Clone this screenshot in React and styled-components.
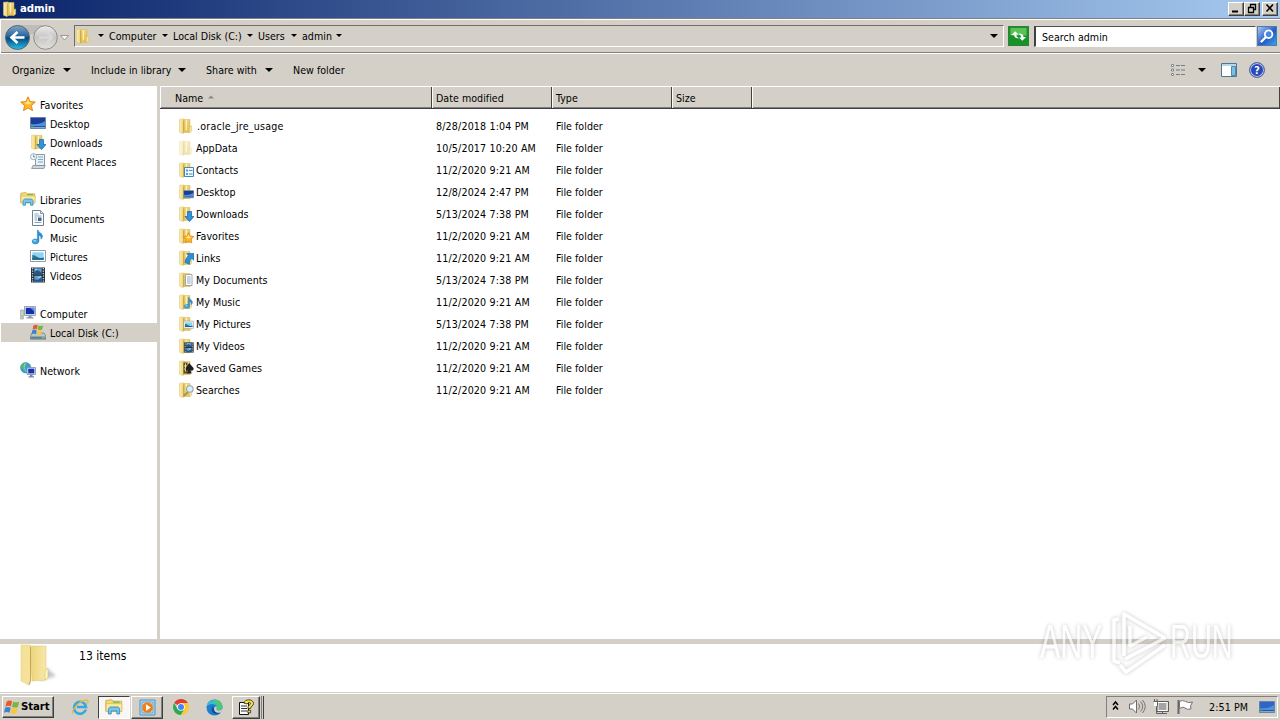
import React from "react";
import styled, { createGlobalStyle, css } from "styled-components";

const face = "#d4d0c8";

const GlobalStyle = createGlobalStyle`
  * {
    box-sizing: border-box;
  }
  body {
    margin: 0;
    background: #ffffff;
    overflow: hidden;
  }
`;

function Folder({ faded, children }) {
  return (
    <svg width="16" height="16" viewBox="0 0 16 16">
      <defs>
        <linearGradient id="folderFront" x2="1">
          <stop stopColor="#fbeeb0" />
          <stop offset="1" stopColor="#ecd070" />
        </linearGradient>
        <linearGradient id="folderBack" x2="1" y2="1">
          <stop stopColor="#f8e597" />
          <stop offset="1" stopColor="#dfb741" />
        </linearGradient>
      </defs>
      <g opacity={faded ? 0.45 : 1}>
        <path d="M5.500 1.500H12v13H5.500z" fill="url(#folderBack)" stroke="#d8b758" strokeWidth=".5" />
        <path d="M11.300 9l2.400-1.200v5.400L11.300 14.800z" fill="#f7e79f" stroke="#cfae4b" strokeWidth=".4" />
        <path d="M1.500 1.300L6.200.9v13.500l-1.200 1.200-3.500-1.400z" fill="url(#folderFront)" stroke="#dfc56c" strokeWidth=".5" />
        <path d="M6.300 1.500v12.800l-1.200 1.200V3z" fill="#cda844" />
        <path d="M8.500 2v10" stroke="#fbf0b8" />
      </g>
      {children}
    </svg>
  );
}

const Monitor = ({ bright }) => (
  <>
    <path d="M.5 2.500h15v11H.5z" fill="#2852a4" stroke="#6c83a8" />
    <path d="M1 3h14v4.500L5 10 1 9z" fill={bright ? "#2f66c4" : "#1c3d97"} />
    <path d="M1 9q8 1 14-3v5H1z" fill="#4a92de" />
    <path d="M1 12.500h14" stroke="#8ba6c7" />
    <path d="M1.500 12h2" stroke="#63be4f" />
  </>
);

const Arrow = () => (
  <path d="M9.500 5.500h4v5H16l-4.500 5L7 10.500h2.500z" fill="#2f93df" stroke="#1763a8" strokeWidth=".7" />
);

const Star = () => (
  <>
    <path
      d="M8 .8l2.100 4.700 5.200.6-3.900 3.400 1.100 5.100L8 12l-4.500 2.600 1.100-5.100L.7 6.100l5.200-.6z"
      fill="#ffb92b"
      stroke="#e17c14"
      strokeWidth=".9"
    />
    <path d="M8 3l1.200 3.300 3 .4L8 8.500 4 6.700l2.800-.4z" fill="#ffe88c" />
  </>
);

const Note = () => (
  <>
    <path d="M8 1c.6 3 4.400 3 4.400 6.200 0 1.300-.6 2.400-1.500 3 .5-2.500-.8-3.600-2-4v6.200H7.400V1z" fill="#2d91d4" stroke="#2277b5" strokeWidth=".5" />
    <ellipse cx="5.400" cy="12.400" rx="3.300" ry="2.500" fill="#40a3e0" stroke="#2277b5" strokeWidth=".5" />
    <ellipse cx="4.800" cy="11.700" rx="1.400" ry=".8" fill="#a3dcf7" />
  </>
);

const Picture = () => (
  <>
    <path d="M.5 2.500h15v11H.5z" fill="#fff" stroke="#8d9cab" />
    <path d="M2.300 4.300h11.400v7.400H2.300z" fill="#8fd3f2" />
    <path d="M2.300 7q3 0 5 2t6.400.2v2.500H2.300z" fill="#2f7d75" />
    <path d="M2.300 10q6-.6 11.400.4v1.300H2.300z" fill="#1a64a0" />
  </>
);

const Film = () => (
  <>
    <path d="M1 .5h14v15H1z" fill="#25313f" />
    <path d="M2.600 1v14M13.400 1v14" stroke="#c8d1db" strokeWidth="1.300" strokeDasharray="1.200 1.300" />
    <path d="M4.300 1.300h7.400v6H4.300zM4.300 8.700h7.400v6H4.300z" fill="#5f9fd2" />
    <path d="M4.300 5l3-2 4.400 2.600v1.700H4.300zM4.300 12l3.400 1 4-2.400v4.100H4.300z" fill="#2a5684" />
    <path d="M5 3l2-1M8 10.500l3-.8" stroke="#b0ddf7" />
  </>
);

const Document = () => (
  <>
    <path d="M2.500.5h8l3 3v12h-11z" fill="#fdfeff" stroke="#6f8091" />
    <path d="M10.500.5v3h3" fill="#d7e3ee" stroke="#6f8091" strokeWidth=".8" />
    <path d="M4.500 4h4M4.500 6h7M4.500 8h2.500M4.500 10h2.500M4.500 12.500h7" stroke="#8ba4ba" />
    <path d="M8 7.500h3.500v3.500H8z" fill="#3c6694" />
  </>
);

const overlays = {
  contacts: (
    <>
      <path d="M6.500 5.500h9v9h-9z" fill="#edf8ff" stroke="#4585b7" />
      <path d="M8 7.500h2v2H8zM8 11h2v2H8z" fill="#4f9fd4" />
      <path d="M11 8.500h3.500M11 12h3.500" stroke="#558ab2" />
    </>
  ),
  desktop: <g transform="translate(5.500 5) scale(.65)"><Monitor /></g>,
  downloads: <Arrow />,
  favorites: <g transform="translate(4.500 4) scale(.75)"><Star /></g>,
  links: (
    <path d="M8.500 3.500H16v7l-2.200-2.200c-1.500 1.400-2.400 3.400-2.200 6L7 12.500c0-2.800 1.800-5.200 3.700-7z" fill="#2b8ed8" stroke="#1765a5" strokeWidth=".6" />
  ),
  documents: (
    <>
      <path d="M7.500 2.500h6.500v11H7.500z" fill="#fff" stroke="#8496a5" strokeWidth=".8" />
      <path d="M9 5h3.700M9 7h3.700M9 9h3.700M9 11h3.700" stroke="#7494b0" strokeWidth=".8" />
    </>
  ),
  music: <g transform="translate(4.500 2.500) scale(.8)"><Note /></g>,
  pictures: <g transform="translate(5.500 3.500) scale(.65)"><Picture /></g>,
  videos: <g transform="translate(5.500 4) scale(.68)"><Film /></g>,
  games: (
    <>
      <path d="M5.500 2.500h4v11h-4z" fill="#5a4b27" />
      <path d="M7.500 3.500v8M6 6h3M6 9h3" stroke="#efe0a7" />
      <path d="M11.200 3l4.300 5c.8 2-1.300 3.500-3 2.200l1 3.300H8.800l1.400-3.300C8.500 11.300 7 9.500 8 7.800z" fill="#1e2022" />
    </>
  ),
  searches: (
    <>
      <path d="M10 9.600L5.800 14" stroke="#a38b5a" strokeWidth="1.800" />
      <circle cx="11.800" cy="7" r="3.300" fill="#d8effa" stroke="#91a7b6" strokeWidth="1.100" />
    </>
  ),
};

function LibraryIcon({ size = 16 }) {
  return (
    <svg width={size} height={size} viewBox="0 0 16 16">
      <path d="M.7 2.200L6 1.500l1 1.300h7.800v9H.7z" fill="#f4d978" stroke="#c7a43d" strokeWidth=".7" />
      <path d="M1 5h14v7H1z" fill="#faeaa1" stroke="#d6b64f" strokeWidth=".6" />
      <path d="M7 3.700h6" stroke="#63b355" />
      <path d="M3 14.200V9.500L4.600 8h7.100L13 9.500v4.700h-2.500v-2.700h-5v2.700z" fill="#78c6ed" stroke="#368dbc" strokeWidth=".8" />
    </svg>
  );
}

function Flag() {
  return (
    <g>
      <path d="M2.400 2.500Q5 .6 7.600 2L6.500 7Q4.200 5.700 1.300 7.200z" fill="#e9592c" />
      <path d="M8.600 2.300q2.700 1.500 5.600.2L13 7.400q-2.700 1.300-5.500 0z" fill="#78b63e" />
      <path d="M1 8.200q2.800-1.500 5.300 0L5.200 13Q2.800 11.600 0 13z" fill="#3f83cc" />
      <path d="M7.300 8.400q2.700 1.300 5.400.1l-1.200 4.800q-2.600 1.400-5.300-.1z" fill="#f8c637" />
    </g>
  );
}

function NavIcon({ name }) {
  if (name === "libraries") return <LibraryIcon />;
  if (name === "downloads") return <Folder>{overlays.downloads}</Folder>;
  const shapes = {
    favorites: <Star />,
    desktop: <Monitor />,
    documents: <Document />,
    music: <Note />,
    pictures: <Picture />,
    videos: <Film />,
    recent: (
      <>
        <path d="M5.500 1.500h9v11h-9z" fill="#e9eff2" stroke="#8999a4" />
        <path d="M3 12.500h12.200l-1.300 3H1.600z" fill="#ccd6dc" stroke="#7b8b97" strokeWidth=".8" />
        <path d="M8 4h5M8 6.500h5M8 9h5" stroke="#7fa9c4" />
        <circle cx="3.600" cy="3.700" r="3.100" fill="#f4f9fc" stroke="#8d9aa4" strokeWidth=".8" />
        <path d="M3.600 1.800v2.100h1.700" stroke="#496f89" strokeWidth=".8" fill="none" />
      </>
    ),
    computer: (
      <>
        <path d="M.7 5h2.600v9H.7z" fill="#d1dbc5" stroke="#8a9790" strokeWidth=".7" />
        <path d="M1.400 11h1.300" stroke="#6eb53d" />
        <path d="M4.500 1.500h11v9h-11z" fill="#dce3e9" stroke="#8293a4" strokeWidth=".8" />
        <path d="M5.800 2.800h8.500v6.300H5.800z" fill="#162fb0" />
        <path d="M10 2.800h4.300v3.800z" fill="#5c8ee5" />
        <path d="M8.500 10.800h3v1.500h2v1.200h-7v-1.200h2z" fill="#8996a6" />
      </>
    ),
    disk: (
      <>
        <path d="M2 9h12l2 3.400v2.800H.3v-2.800z" fill="#b9c9d0" stroke="#63747f" strokeWidth=".7" />
        <path d="M.5 12.500h15.200v2.400H.5z" fill="#638291" />
        <path d="M12 13.700h2.500" stroke="#86df6c" />
        <g transform="translate(1.500 -.5) scale(.82)"><Flag /></g>
      </>
    ),
    network: (
      <>
        <circle cx="5.700" cy="5.700" r="5.200" fill="#38a0cd" stroke="#267ba5" strokeWidth=".5" />
        <path d="M2 2.500q3-2 5-.8L6.300 4 4 5l-.5 3L1 6z" fill="#5bba5f" />
        <path d="M5.500 1q-3 4 1 9" stroke="#a9def1" fill="none" strokeWidth=".7" />
        <path d="M7 5.500h8.500v7H7z" fill="#d8e4ef" stroke="#7c91a9" strokeWidth=".8" />
        <path d="M8.200 6.700h6.100v4.700H8.200z" fill="#1736b7" />
        <path d="M10 12.800h2.500v1.400H14v1.200H8.500v-1.200H10z" fill="#75899f" />
      </>
    ),
  };
  return <svg width="16" height="16" viewBox="0 0 16 16">{shapes[name]}</svg>;
}

const navGroups = [
  [
    { label: "Favorites", icon: "favorites", root: true },
    { label: "Desktop", icon: "desktop" },
    { label: "Downloads", icon: "downloads" },
    { label: "Recent Places", icon: "recent" },
  ],
  [
    { label: "Libraries", icon: "libraries", root: true },
    { label: "Documents", icon: "documents" },
    { label: "Music", icon: "music" },
    { label: "Pictures", icon: "pictures" },
    { label: "Videos", icon: "videos" },
  ],
  [
    { label: "Computer", icon: "computer", root: true },
    { label: "Local Disk (C:)", icon: "disk", selected: true },
  ],
  [{ label: "Network", icon: "network", root: true }],
];

const files = [
  [".oracle_jre_usage", "8/28/2018 1:04 PM", "plain"],
  ["AppData", "10/5/2017 10:20 AM", "faded"],
  ["Contacts", "11/2/2020 9:21 AM", "contacts"],
  ["Desktop", "12/8/2024 2:47 PM", "desktop"],
  ["Downloads", "5/13/2024 7:38 PM", "downloads"],
  ["Favorites", "11/2/2020 9:21 AM", "favorites"],
  ["Links", "11/2/2020 9:21 AM", "links"],
  ["My Documents", "5/13/2024 7:38 PM", "documents"],
  ["My Music", "11/2/2020 9:21 AM", "music"],
  ["My Pictures", "5/13/2024 7:38 PM", "pictures"],
  ["My Videos", "11/2/2020 9:21 AM", "videos"],
  ["Saved Games", "11/2/2020 9:21 AM", "games"],
  ["Searches", "11/2/2020 9:21 AM", "searches"],
];

const crumbs = [
  ["Computer", 64],
  ["Local Disk (C:)", 85],
  ["Users", 44],
  ["admin", 45],
];

const commands = [
  ["Organize", 79],
  ["Include in library", 115],
  ["Share with", 87],
  ["New folder", 70],
];

export default function App() {
  return (
    <Screen>
      <GlobalStyle />
      <TitleBar>
        <Folder />
        <Title>admin</Title>
        <WindowButton>
          <svg width="14" height="11"><path d="M3 8.500h6" stroke="#000" strokeWidth="2" /></svg>
        </WindowButton>
        <WindowButton>
          <svg width="14" height="11">
            <path d="M5.500 1v3M5 1.500h6M10.500 1v5.500H8.500M3 4.500h6M3.500 4v5.500h5V4" fill="none" stroke="#000" strokeWidth="1.300" />
          </svg>
        </WindowButton>
        <WindowButton $gap>
          <svg width="14" height="11"><path d="M3.500 1.500l6.500 7M10 1.500l-6.500 7" stroke="#000" strokeWidth="1.600" /></svg>
        </WindowButton>
      </TitleBar>

      <AddressBar>
        <BackForward />
        <AddressBox>
          <Folder />
          <CrumbArrow><Triangle /></CrumbArrow>
          {crumbs.map(([label, width]) => (
            <Crumb key={label} $width={width}>
              <span>{label}</span>
              <Triangle />
            </Crumb>
          ))}
          <HistoryButton><Triangle $size={4} /></HistoryButton>
        </AddressBox>
        <RefreshButton>
          <svg width="19" height="18" viewBox="0 0 19 19">
            <path d="M1 1h17v8H1z" fill="#5bc057" />
            <path d="M2 8.500l4-4 3.500 3.500H7.300c0 2 .7 3 2.700 4-3 .2-5-1-5.200-3.500z" fill="#fff" />
            <path d="M17.500 10.500l-4 4L10 11h2.300c0-2-1-3.200-2.800-4 3-.3 5.200 1 5.300 3.500z" fill="#fff" />
          </svg>
        </RefreshButton>
        <SearchInput>Search admin</SearchInput>
        <SearchButton>
          <svg width="18" height="18" viewBox="0 0 18 18">
            <path d="M8 10l-4.500 4.500" stroke="#fff" strokeWidth="2.400" strokeLinecap="round" />
            <circle cx="10.600" cy="7.200" r="3.800" fill="#4a87df" stroke="#fff" strokeWidth="1.800" />
          </svg>
        </SearchButton>
      </AddressBar>

      <CommandBar>
        {commands.map(([label, width], i) => (
          <Command key={label} $width={width}>
            <span>{label}</span>
            {i < 3 && <Triangle $size={4} />}
          </Command>
        ))}
        <CommandTools>
          <svg width="17" height="14" viewBox="0 0 17 14">
            <path d="M1.500 1.500h2v2h-2zM1.500 6h2v2h-2zM1.500 10.500h2v2h-2z" fill="#fff" stroke="#7e8993" />
            <path d="M6 2.500h4M11 2.500h4M6 7h4M11 7h4M6 11.500h4M11 11.500h4" stroke="#737d85" />
          </svg>
          <Triangle $size={4} />
          <svg width="16" height="14" viewBox="0 0 16 14">
            <path d="M.5.5h15v13H.5z" fill="#fff" stroke="#4c7695" />
            <path d="M1 2h14" stroke="#b5d8eb" strokeWidth="2" />
            <path d="M10.500 3.500h4v9h-4z" fill="#78c1e3" stroke="#4d88a9" />
          </svg>
          <Help>?</Help>
        </CommandTools>
      </CommandBar>

      <Main>
        <NavPane>
          {navGroups.map((group) => (
            <NavGroup key={group[0].label}>
              {group.map((item) => (
                <NavItem key={item.label} $root={item.root} $selected={item.selected}>
                  <NavIcon name={item.icon} />
                  <span>{item.label}</span>
                </NavItem>
              ))}
            </NavGroup>
          ))}
        </NavPane>
        <FilePane>
          <HeaderRow>
            <HeaderCell $width={272} $first>
              Name
              <svg width="6" height="4"><path d="M0 3.500L3 .5l3 3z" fill="#8d8a84" /></svg>
            </HeaderCell>
            <HeaderCell $width={120}>Date modified</HeaderCell>
            <HeaderCell $width={120}>Type</HeaderCell>
            <HeaderCell $width={80}>Size</HeaderCell>
            <HeaderCell />
          </HeaderRow>
          <FileList>
            {files.map(([name, date, icon]) => (
              <FileRow key={name}>
                <NameCell $wide={name.startsWith(".")}>
                  <Folder faded={icon === "faded"}>{overlays[icon]}</Folder>
                  <span>{name}</span>
                </NameCell>
                <DateCell>{date}</DateCell>
                <span>File folder</span>
              </FileRow>
            ))}
          </FileList>
        </FilePane>
      </Main>

      <Details>
        <svg width="38" height="42" viewBox="0 0 38 42">
          <defs>
            <linearGradient id="front" x2="1">
              <stop stopColor="#ecd37a" />
              <stop offset="1" stopColor="#f8e9a9" />
            </linearGradient>
            <filter id="soft"><feGaussianBlur stdDeviation="1.500" /></filter>
          </defs>
          <path d="M20 37l16-5-9-8z" fill="#c8c8c8" filter="url(#soft)" />
          <path d="M10 2h16v34l-14 1z" fill="url(#front)" stroke="#dbc36f" strokeWidth=".5" />
          <path d="M25 27l3-3v10l-3 2z" fill="#fdf6c4" stroke="#d1b654" strokeWidth=".5" />
          <path d="M1 1h9l.500 4v32L9 41l-8-4z" fill="#f5e19a" stroke="#e0c672" strokeWidth=".5" />
          <path d="M10.500 3v34L9 41" stroke="#c8a74d" fill="none" />
        </svg>
        <ItemCount>13 items</ItemCount>
      </Details>

      <Taskbar>
        <StartButton>
          <svg width="16" height="16" viewBox="0 0 15 15"><Flag /></svg>
          <span>Start</span>
        </StartButton>
        <TaskButton>
          <svg width="18" height="18" viewBox="0 0 18 18">
            <path d="M14.800 11.500A6 6 0 1 1 15 9H6" fill="none" stroke="#36a8df" strokeWidth="2.500" />
            <path d="M1.800 16C-.5 12.500 10 1 16.500 2.300c1 .5.500 2-.5 3.700" fill="none" stroke="#e8b93c" strokeWidth="1.300" />
          </svg>
        </TaskButton>
        <TaskButton $pressed><LibraryIcon size={18} /></TaskButton>
        <TaskButton $raised>
          <svg width="17" height="17" viewBox="0 0 17 17">
            <path d="M1 1h15v15H1z" fill="#b8dcf2" stroke="#4a91bf" />
            <path d="M3 3h11v11H3z" fill="none" stroke="#6fa8cb" />
            <circle cx="8.500" cy="8.500" r="5.300" fill="#ef7f16" />
            <path d="M7 5.300l4.800 3.200L7 11.700z" fill="#fff" />
          </svg>
        </TaskButton>
        <TaskButton>
          <svg width="16" height="16" viewBox="0 0 16 16">
            <path d="M8 8L1.100 4A8 8 0 0 1 15 4H8z" fill="#e33b2e" />
            <path d="M8 8l3.500 2L8 16A8 8 0 0 1 1.100 4L4.500 10z" fill="#2da94f" />
            <path d="M8 4h7a8 8 0 0 1-7 12l3.500-6z" fill="#fcc934" />
            <circle cx="8" cy="8" r="3.800" fill="#fff" />
            <circle cx="8" cy="8" r="3" fill="#4285f4" />
          </svg>
        </TaskButton>
        <TaskButton>
          <svg width="17" height="17" viewBox="0 0 17 17">
            <circle cx="8.500" cy="8.500" r="8" fill="#1b7fce" />
            <path d="M.5 8C1-.5 14-2 16.500 7c.3 3-2 4.500-4.500 4.300-2 0-2.400-.8-1.500-2C12 5 4 3 .5 8z" fill="#35bdce" />
            <path d="M9 .5c4 0 7 3 7.500 6.500.3 3-2 4.500-4.500 4.300-2 0-2.400-.8-1.500-2C12.500 6 10 4 7 3z" fill="#4fc77b" />
            <path d="M6.500 7.500C3.500 12 8 17.500 15 13.500c-4 1-7-.5-7-4z" fill="#17499a" />
            <path d="M10.500 9.300c-1 1.500.3 2.300 2.800 2.100 1.600-.2 2.800-1 3.200-2.400v2.200L15 13.500c-4 1-7-.5-7-4 0-1 1-2 2-2 .8.200 1 .8.500 1.800z" fill="#d4d0c8" />
          </svg>
        </TaskButton>
        <TaskButton $raised $narrow>
          <svg width="17" height="17" viewBox="0 0 17 17">
            <path d="M1.500 3.500h9v12h-9z" fill="#fff" stroke="#111" />
            <path d="M3 7h6M3 9.500h6M3 12h6" stroke="#333" />
            <path d="M6 4.200C6.300-.3 15.500-.3 15.500 4.500c0 2.700-3 2.500-3 5H9.800c0-3.500 2.800-3.500 2.800-5 0-1.600-3-1.500-3.300.500zM9.800 11.300h2.800v2.500H9.800z" fill="#ffe831" stroke="#222" strokeWidth=".8" />
          </svg>
        </TaskButton>
        <BandEdge />
        <Tray>
          <TrayIcons />
          <Clock>2:51 PM</Clock>
          <svg width="16" height="16" viewBox="0 0 16 16"><Monitor bright /></svg>
        </Tray>
      </Taskbar>
      <Watermark />
    </Screen>
  );
}

function BackForward() {
  return (
    <svg width="72" height="29" viewBox="0 0 72 29">
      <defs>
        <linearGradient id="back" x2="0" y2="1">
          <stop stopColor="#86a6c5" />
          <stop offset=".45" stopColor="#23659f" />
          <stop offset=".52" stopColor="#064779" />
          <stop offset="1" stopColor="#28c1ed" />
        </linearGradient>
        <linearGradient id="forward" x2="0" y2="1">
          <stop stopColor="#ececec" />
          <stop offset=".5" stopColor="#c6c5c3" />
          <stop offset="1" stopColor="#e3e2df" />
        </linearGradient>
      </defs>
      <path d="M12 3h32v6L32 12h-6z" fill="#bebdb9" />
      <circle cx="15.500" cy="15.500" r="12" fill="url(#back)" stroke="#51687c" />
      <path d="M22.500 15.500H10M15.500 10L9.500 15.500l6 5.500" fill="none" stroke="#fff" strokeWidth="2.600" />
      <circle cx="43.500" cy="15.500" r="11.800" fill="url(#forward)" stroke="#8e8e8c" />
      <path d="M37 15.500h12M44.500 10L50 15.500 44.500 21" fill="none" stroke="#d9d8d6" strokeWidth="2.400" />
      <path d="M58.500 13.500h8L62.500 18z" fill="#f7f7f5" stroke="#888681" strokeWidth=".8" />
    </svg>
  );
}

function TrayIcons() {
  return (
    <svg width="86" height="18" viewBox="0 0 86 18">
      <path d="M3 7l2.500-3L8 7M3 11.500l2.500-3 2.500 3" stroke="#000" strokeWidth="1.500" fill="none" />
      <path d="M19.500 6h3l4-4v13l-4-4h-3z" fill="#fff" stroke="#6c6c6c" />
      <path d="M28.500 5.500q2.500 3 0 6M30.500 3.500q4.500 5 0 10M32.500 2q5.500 6.500 0 13" stroke="#737373" fill="none" />
      <path d="M48 4.500h9v8h-9z" fill="#a5a5a5" stroke="#fff" />
      <path d="M47 3.500h11.500v10H47z" fill="none" stroke="#5d5d5d" />
      <path d="M49 15.500h8M52.500 13v2" stroke="#606060" />
      <path d="M43.500 3.500h4v4l-1 1.500v6.500h3M44.500 1v3M47 1v3" stroke="#606060" fill="none" />
      <path d="M44 4h3v4h-3z" fill="#fff" />
      <path d="M68.500 2v14" stroke="#656565" strokeWidth="2" />
      <path d="M69.500 3.500q3-2 6 0t7 .5l-2 4 .5 3q-4 1-6-1t-5.500.500z" fill="#fff" stroke="#757575" />
    </svg>
  );
}

function Watermark() {
  return (
    <WatermarkBox>
      <WatermarkText $scale={0.62}>ANY</WatermarkText>
      <svg width="60" height="66" viewBox="0 0 60 66">
        <g fill="none" stroke="#fff" strokeWidth="3.500" strokeLinejoin="round">
          <path d="M13 11l-5 1v41l6 2" />
          <path d="M18 48V6l41 24-40 21" />
          <path d="M24 18v20l17-9" />
          <path d="M14 57l6 7 39-27" />
        </g>
      </svg>
      <WatermarkText $scale={0.59}>RUN</WatermarkText>
    </WatermarkBox>
  );
}

const raised = css`
  border: 1px solid;
  border-color: #ffffff #404040 #404040 #ffffff;
  box-shadow: inset -1px -1px 0 #808080;
`;

const Screen = styled.div`
  position: relative;
  width: 1280px;
  height: 720px;
  display: flex;
  flex-direction: column;
  background: ${face};
  color: #000000;
  font-family: "DejaVu Sans Condensed", "DejaVu Sans", sans-serif;
  font-stretch: condensed;
  font-size: 10.6px;
  letter-spacing: 0.02px;
  line-height: 14px;
  white-space: nowrap;
  overflow: hidden;

  svg {
    flex-shrink: 0;
  }
`;
const TitleBar = styled.div`
  height: 18px;
  flex-shrink: 0;
  display: flex;
  align-items: center;
  padding: 0 2px;
  background: linear-gradient(90deg, #0a246a, #a6caf0);
`;
const Title = styled.div`
  flex: 1;
  margin-left: 2px;
  color: #ffffff;
  font-size: 11.3px;
  font-weight: bold;
  letter-spacing: -0.1px;
`;
const WindowButton = styled.div`
  ${raised}
  width: 16px;
  height: 14px;
  margin-left: ${(props) => (props.$gap ? "2px" : "0")};
  background: ${face};

  svg {
    display: block;
  }
`;
const AddressBar = styled.div`
  height: 36px;
  flex-shrink: 0;
  display: flex;
  align-items: center;
  padding: 0 2px;
  border-top: 1px solid #808080;
  border-bottom: 1px solid #ffffff;
  box-shadow: inset 0 1px 0 #ffffff, inset 1px 0 0 #ffffff, inset 0 -1px 0 #808080;
`;
const AddressBox = styled.div`
  width: 930px;
  height: 22px;
  display: flex;
  align-items: center;
  padding-bottom: 1px;
  border: 1px solid;
  border-color: #6e6d69 #ffffff #ffffff #6e6d69;
`;
const Triangle = styled.i`
  border: ${(props) => props.$size || 3}px solid transparent;
  border-top-color: #000000;
  border-bottom-width: 0;
`;
const CrumbArrow = styled.div`
  display: flex;
  padding-left: 7px;
`;
const Crumb = styled.div`
  width: ${(props) => props.$width}px;
  display: flex;
  align-items: center;
  justify-content: space-between;
  padding-left: 5px;
`;
const HistoryButton = styled.div`
  margin-left: auto;
  margin-right: 5px;
  display: flex;
`;
const RefreshButton = styled.div`
  width: 21px;
  height: 20px;
  margin-left: 4px;
  border: 1px solid #337f3a;
  background: #16922a;
`;
const SearchInput = styled.div`
  width: 222px;
  height: 21px;
  margin-left: 5px;
  padding: 3px 6px;
  border: 1px solid #ffffff;
  border-top: 1px solid #505050;
  border-left: 2px solid #404040;
  background: #ffffff;
`;
const SearchButton = styled.div`
  width: 20px;
  height: 20px;
  margin-left: 1px;
  border: 1px solid #5378ae;
  background: linear-gradient(135deg, #a8ccf2, #2558c4 55%, #38a6e9);
`;
const CommandBar = styled.div`
  height: 32px;
  flex-shrink: 0;
  display: flex;
  align-items: center;
  padding-left: 12px;
`;
const Command = styled.div`
  width: ${(props) => props.$width}px;
  display: flex;
  align-items: center;
  padding-right: 20px;

  i {
    margin-left: auto;
  }
`;
const CommandTools = styled.div`
  margin-left: auto;
  padding-right: 15px;
  display: flex;
  align-items: center;

  i {
    margin: 0 15px 0 11px;
  }
`;
const Help = styled.b`
  width: 16px;
  height: 16px;
  margin-left: 12px;
  border: 1px solid #5f6da1;
  border-radius: 50%;
  background: #2749b9;
  box-shadow: inset 0 0 0 1px #b9c6e9;
  color: #ffffff;
  line-height: 14px;
  text-align: center;
`;
const Main = styled.div`
  height: 553px;
  display: flex;
  background: #ffffff;
`;
const NavPane = styled.div`
  width: 160px;
  padding: 9px 0 0 1px;
  border-right: 3px solid ${face};
`;
const NavGroup = styled.div`
  margin-bottom: 19px;
`;
const NavItem = styled.div`
  height: 19px;
  display: flex;
  align-items: center;
  padding-left: ${(props) => (props.$root ? 19 : 29)}px;
  background: ${(props) => (props.$selected ? face : "transparent")};

  svg {
    margin-bottom: 2px;
  }
  span {
    margin-left: 4px;
  }
`;
const FilePane = styled.div`
  flex: 1;
`;
const HeaderRow = styled.div`
  height: 23px;
  display: flex;
  background: ${face};
  border-top: 1px solid #ffffff;
  border-bottom: 1px solid #404040;
`;
const HeaderCell = styled.div`
  ${(props) => (props.$width ? `width: ${props.$width}px;` : "flex: 1;")}
  display: flex;
  align-items: center;
  padding-left: ${(props) => (props.$first ? 14 : 3)}px;
  border-left: 1px solid #ffffff;
  border-right: 1px solid #404040;
  box-shadow: inset 0 -1px 0 #808080;

  svg {
    margin-left: 5px;
    margin-bottom: 2px;
  }
`;
const FileList = styled.div`
  padding: 6px 0 0 18px;
`;
const FileRow = styled.div`
  height: 22px;
  display: flex;
  align-items: center;
`;
const NameCell = styled.div`
  width: 258px;
  display: flex;
  align-items: center;

  svg {
    margin-bottom: 1px;
  }
  span {
    margin-left: ${(props) => (props.$wide ? 3 : 2)}px;
    letter-spacing: ${(props) => (props.$wide ? 0.22 : 0.02)}px;
  }
`;
const DateCell = styled.div`
  width: 120px;
  letter-spacing: 0.16px;
`;
const Details = styled.div`
  height: 54px;
  flex-shrink: 0;
  display: flex;
  padding-left: 20px;
  background: #ffffff;
  border-top: 5px solid ${face};
  border-bottom: 1px solid ${face};
`;
const ItemCount = styled.div`
  margin: 5px 0 0 21px;
  font-size: 12px;
`;
const Taskbar = styled.div`
  height: 27px;
  display: flex;
  align-items: center;
  padding: 1px 2px 0;
  box-shadow: inset 0 1px 0 #ffffff;
`;
const StartButton = styled.div`
  ${raised}
  width: 52px;
  height: 22px;
  display: flex;
  align-items: center;
  padding-left: 1px;
  margin-right: 10px;
  font-size: 11.3px;
  font-weight: bold;
  letter-spacing: -0.1px;

  span {
    margin-left: 1px;
  }
`;
const TaskButton = styled.div`
  width: ${(props) => (props.$narrow ? 28 : 32)}px;
  height: 23px;
  margin-right: ${(props) => (props.$narrow ? 1 : 1.7)}px;
  display: flex;
  align-items: center;
  justify-content: center;
  ${(props) => props.$raised && raised}
  ${(props) =>
    props.$pressed &&
    css`
      background: #f8f7f5;
      border: 1px solid;
      border-color: #404040 #ffffff #ffffff #404040;
    `}
`;
const BandEdge = styled.div`
  width: 3px;
  height: 23px;
  border-right: 1px solid #404040;
  border-left: 1px solid #808080;
`;
const Tray = styled.div`
  width: 172px;
  height: 22px;
  margin-left: auto;
  padding-left: 3px;
  display: flex;
  align-items: center;
  border: 1px solid;
  border-color: #808080 #ffffff #ffffff #808080;
`;
const Clock = styled.div`
  width: 51px;
  margin-left: 13px;
  margin-right: -1px;
  letter-spacing: 0.1px;
`;
const WatermarkBox = styled.div`
  position: absolute;
  left: 1040px;
  top: 607px;
  width: 192px;
  display: grid;
  grid-template-columns: 66px 64px 62px;
  align-items: center;
  opacity: 0.65;
  filter: drop-shadow(0 0 2px rgba(0, 0, 0, 0.35));
`;
const WatermarkText = styled.div`
  width: 0;
  color: #ffffff;
  font-family: "Liberation Sans", sans-serif;
  font-size: 49px;
  line-height: 68px;
  letter-spacing: 0;
  transform: scaleX(${(props) => props.$scale});
  transform-origin: left;
`;
